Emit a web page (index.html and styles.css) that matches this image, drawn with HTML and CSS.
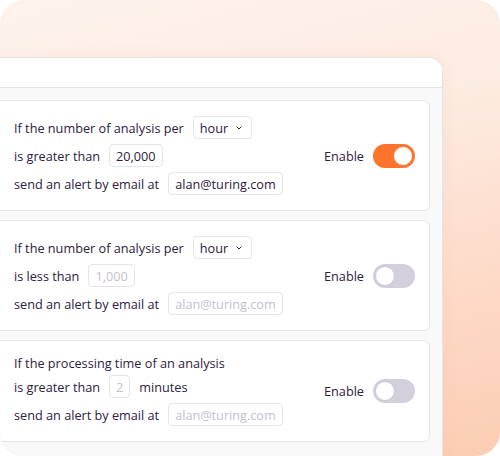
FILE: index.html
```html
<!DOCTYPE html>
<html>
<head>
<meta charset="utf-8">
<link rel="stylesheet" href="styles.css">
</head>
<body>
<div class="bg">
  <div class="panel">
    <div class="panel-head"></div>
    <div class="panel-body">
      <div class="card">
        <div class="rules">
          <div class="row"><span>If the number of analysis per</span><span class="box select">hour<svg class="chev" viewBox="0 0 6 4" width="6" height="4"><path d="M0.8 0.8 L3 3 L5.2 0.8" fill="none" stroke="#2d2040" stroke-width="1" stroke-linecap="round" stroke-linejoin="round"/></svg></span></div>
          <div class="row"><span>is greater than</span><span class="box">20,000</span></div>
          <div class="row"><span>send an alert by email at</span><span class="box">alan@turing.com</span></div>
        </div>
        <div class="enable"><span>Enable</span><span class="toggle on"><span class="knob"></span></span></div>
      </div>
      <div class="card">
        <div class="rules">
          <div class="row"><span>If the number of analysis per</span><span class="box select">hour<svg class="chev" viewBox="0 0 6 4" width="6" height="4"><path d="M0.8 0.8 L3 3 L5.2 0.8" fill="none" stroke="#2d2040" stroke-width="1" stroke-linecap="round" stroke-linejoin="round"/></svg></span></div>
          <div class="row"><span>is less than</span><span class="box ph">1,000</span></div>
          <div class="row"><span>send an alert by email at</span><span class="box ph">alan@turing.com</span></div>
        </div>
        <div class="enable"><span>Enable</span><span class="toggle"><span class="knob"></span></span></div>
      </div>
      <div class="card">
        <div class="rules">
          <div class="row text-only"><span>If the processing time of an analysis</span></div>
          <div class="row"><span>is greater than</span><span class="box ph">2</span><span>minutes</span></div>
          <div class="row"><span>send an alert by email at</span><span class="box ph">alan@turing.com</span></div>
        </div>
        <div class="enable"><span>Enable</span><span class="toggle"><span class="knob"></span></span></div>
      </div>
    </div>
  </div>
</div>
</body>
</html>
```
FILE: styles.css
```css
html, body {
  margin: 0;
  padding: 0;
  background: #ffffff;
  overflow: hidden;
  width: 500px;
  height: 456px;
}
body {
  font-family: "Open Sans", "DejaVu Sans", sans-serif;
  color: #2d2040;
  font-size: 12.7px;
}
.bg {
  width: 500px;
  height: 456px;
  border-radius: 24px;
  background: linear-gradient(165deg, #fdf3ed 0%, #fdece2 35%, #fddac8 70%, #fccdb4 100%);
  padding-top: 57px;
  box-sizing: border-box;
  overflow: hidden;
}
.panel {
  margin-left: -25px;
  width: 468px;
  height: 420px;
  box-sizing: border-box;
  border: 1px solid #e4e3ea;
  border-radius: 0 14px 0 0;
  background: #f9f9f9;
  overflow: hidden;
  box-shadow: 0 0 14px rgba(240, 170, 130, 0.15);
}
.panel-head {
  height: 29px;
  background: #ffffff;
  border-bottom: 1px solid #e4e3ea;
}
.panel-body {
  padding: 12px 12px 0 12px;
  display: flex;
  flex-direction: column;
  gap: 9px;
}
.card {
  background: #ffffff;
  border: 1px solid #e6e4eb;
  border-radius: 6px;
  padding: 15px 14px 15px 25px;
  display: flex;
  align-items: center;
  justify-content: space-between;
}
.rules {
  display: flex;
  flex-direction: column;
  gap: 5px;
}
.row {
  display: flex;
  align-items: center;
  gap: 9px;
  height: 23px;
  white-space: nowrap;
}
.row.text-only {
  height: 14px;
}
.box {
  display: inline-flex;
  align-items: center;
  height: 23px;
  box-sizing: border-box;
  padding: 0 6px;
  border: 1px solid #e6e4eb;
  border-radius: 4px;
  color: #2d2040;
}
.box.ph {
  color: #c3bfcd;
}
.box.select {
  padding: 0 9px 0 6px;
  gap: 8px;
}
.chev {
  display: block;
}
.enable {
  display: flex;
  align-items: center;
  gap: 9px;
}
.toggle {
  width: 42px;
  height: 24px;
  border-radius: 12px;
  background: #d3d0db;
  box-sizing: border-box;
  padding: 2px;
  display: flex;
  justify-content: flex-start;
}
.toggle.on {
  background: #fd742c;
  justify-content: flex-end;
}
.knob {
  width: 20px;
  height: 20px;
  border-radius: 50%;
  background: #ffffff;
  box-sizing: border-box;
  border: 1px solid #c9c5d3;
}
.toggle.on .knob {
  border-color: #fd742c;
}
```
